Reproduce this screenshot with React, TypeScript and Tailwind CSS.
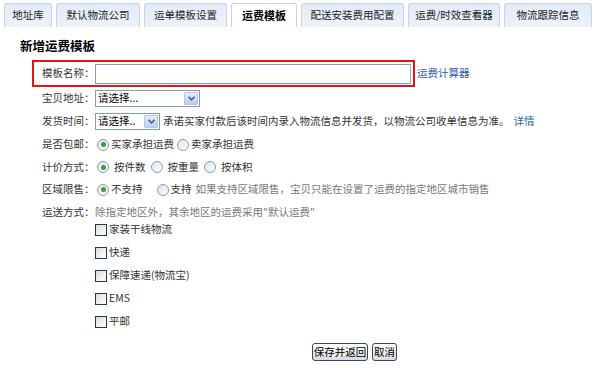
import React from "react";

const tabs = [
  { name: "地址库", w: "w-[48px]" },
  { name: "默认物流公司", w: "w-[84px]" },
  { name: "运单模板设置", w: "w-[83px]" },
  { name: "运费模板", w: "w-[66px]", active: true },
  { name: "配送安装费用配置", w: "w-[103px]" },
  { name: "运费/时效查看器", w: "w-[92px]" },
  { name: "物流跟踪信息", w: "w-[88px]" },
];

const Radio = ({ checked }: { checked?: boolean }) => (
  <span className="inline-flex w-[12px] h-[12px] rounded-full border border-[#8d9bb0] bg-gradient-to-br from-[#dde3ea] to-white items-center justify-center shrink-0">
    {checked && <span className="w-[5px] h-[5px] rounded-full bg-[#3c9c3c]" />}
  </span>
);

const Checkbox = () => (
  <span className="inline-block w-[12px] h-[12px] border border-[#1c3c5c] bg-gradient-to-br from-[#dcdcd6] to-white shrink-0" />
);

const Select = ({ text, w }: { text: string; w: string }) => (
  <div className={`${w} h-[17px] border border-[#7f9db9] bg-white flex items-center justify-between pl-[2px] pr-[1px]`}>
    <span className="text-black">{text}</span>
    <span className="w-[14px] h-[13px] bg-gradient-to-b from-[#e3ecfb] to-[#bacff5] border border-[#b5c8ec] rounded-[1px] flex items-center justify-center">
      <svg width="7" height="5" viewBox="0 0 7 5">
        <path d="M0.5 0.8 L3.5 3.8 L6.5 0.8" fill="none" stroke="#4d6185" strokeWidth="1.6" />
      </svg>
    </span>
  </div>
);

const Label = ({ children }: { children: React.ReactNode }) => (
  <span className="w-[53px] shrink-0 text-[#333]">{children}</span>
);

const App = () => {
  return (
    <div className="w-[600px] h-[368px] bg-white text-[10.5px] text-[#333] font-['Noto_Sans_CJK_SC','Liberation_Sans',sans-serif] leading-none overflow-hidden">
      <div className="flex gap-[4px] pl-[4px] pt-[3px] h-[27px]">
        {tabs.map((t) => (
          <div
            key={t.name}
            className={`${t.w} h-[24px] flex items-center justify-center rounded-t-[3px] border border-b-0 ${
              t.active
                ? "bg-white border-[#c9d3df] font-bold text-black text-[11px]"
                : "bg-gradient-to-b from-[#e2ebf7] to-[#eef3fa] border-[#c6d4e6] text-[#222]"
            }`}
          >
            {t.name}
          </div>
        ))}
      </div>

      <div className="pl-[20px] pt-[13px] h-[33px] text-[12.5px] font-bold text-black">新增运费模板</div>

      <div className="pl-[32px]">
        <div className="flex items-center">
          <div className="w-[383px] h-[27px] border-2 border-[#e0141a] flex items-center pl-[8px]">
            <Label>模板名称：</Label>
            <div className="w-[316px] h-[20px] border border-[#7f9db9] border-r-[#a9a9a9] bg-white" />
          </div>
          <a className="ml-[2px] text-[#2b5cab]">运费计算器</a>
        </div>

        <div className="flex items-center h-[23px] pl-[10px]">
          <Label>宝贝地址：</Label>
          <Select text="请选择..." w="w-[105px]" />
        </div>

        <div className="flex items-center h-[23px] pl-[10px]">
          <Label>发货时间：</Label>
          <Select text="请选择.." w="w-[65px]" />
          <span className="ml-[3px]">承诺买家付款后该时间内录入物流信息并发货，以物流公司收单信息为准。</span>
          <a className="ml-[4px] text-[#2b5cab]">详情</a>
        </div>

        <div className="flex items-center h-[23px] pl-[10px]">
          <Label>是否包邮：</Label>
          <span className="flex items-center gap-[2px] ml-[2px]"><Radio checked />买家承担运费</span>
          <span className="flex items-center gap-[2px] ml-[3px]"><Radio />卖家承担运费</span>
        </div>

        <div className="flex items-center h-[22px] pl-[10px]">
          <Label>计价方式：</Label>
          <span className="flex items-center gap-[5px] ml-[2px]"><Radio checked />按件数</span>
          <span className="flex items-center gap-[5px] ml-[5px]"><Radio />按重量</span>
          <span className="flex items-center gap-[5px] ml-[5px]"><Radio />按体积</span>
        </div>

        <div className="flex items-center h-[23px] pl-[10px]">
          <Label>区域限售：</Label>
          <span className="flex items-center gap-[2px] ml-[2px]"><Radio checked />不支持</span>
          <span className="flex items-center gap-[2px] ml-[14px]"><Radio />支持</span>
          <span className="ml-[4px] text-[#777]">如果支持区域限售，宝贝只能在设置了运费的指定地区城市销售</span>
        </div>

        <div className="flex items-center h-[22px] pl-[10px]">
          <Label>运送方式：</Label>
          <span className="text-[#777]">除指定地区外，其余地区的运费采用"默认运费"</span>
        </div>

        <div className="flex flex-col mt-[-5px] pl-[63px]">
          {["家装干线物流", "快递", "保障速递(物流宝)", "EMS", "平邮"].map((n) => (
            <div key={n} className="flex items-center gap-[2px] h-[23px]">
              <Checkbox />
              <span>{n}</span>
            </div>
          ))}
        </div>
      </div>

      <div className="flex gap-[4px] pl-[312px] mt-[10px]">
        <button className="w-[56px] h-[18px] border border-[#2c4a6b] rounded-[3px] bg-gradient-to-b from-white to-[#dcdcdc] text-black text-[10.5px]">保存并返回</button>
        <button className="w-[25px] h-[18px] border border-[#2c4a6b] rounded-[3px] bg-gradient-to-b from-white to-[#dcdcdc] text-black text-[10.5px]">取消</button>
      </div>
    </div>
  );
};

export default App;
